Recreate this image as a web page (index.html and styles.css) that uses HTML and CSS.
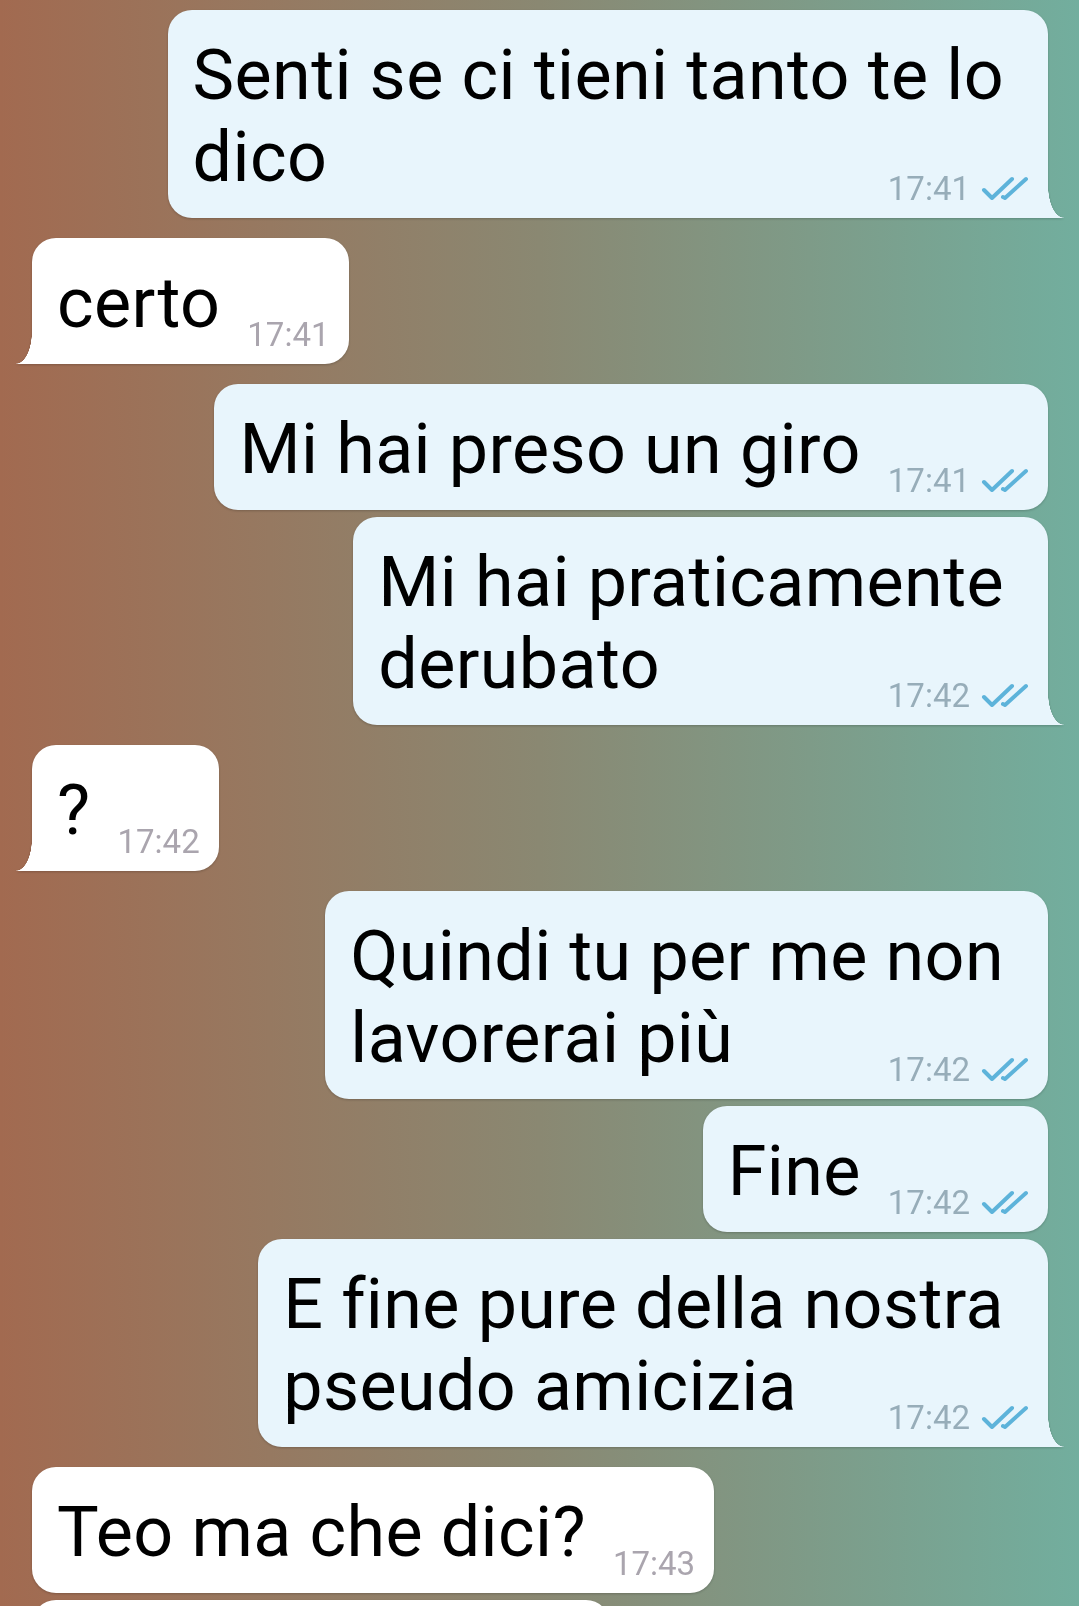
FILE: index.html
```html
<!DOCTYPE html>
<html lang="it">
<head>
    <meta charset="UTF-8">
    <meta name="viewport" content="width=device-width, initial-scale=1.0">
    <title>Chat</title>
    <link rel="stylesheet" href="styles.css">
</head>
<body>
    <main class="chat">
        <div class="group out">
            <div class="bubble multi">
                <p class="text">Senti se ci tieni tanto te lo<br>dico<span class="meta"><span class="time">17:41</span><svg class="check" viewBox="0 0 48 24"><path d="M3 14l8 8L31 3M22 21l2 1L45 3"/></svg></span></p>
            </div>
        </div>
        <div class="group in">
            <div class="bubble">
                <p class="text">certo<span class="meta"><span class="time">17:41</span></span></p>
            </div>
        </div>
        <div class="group out">
            <div class="bubble">
                <p class="text">Mi hai preso un giro<span class="meta"><span class="time">17:41</span><svg class="check" viewBox="0 0 48 24"><path d="M3 14l8 8L31 3M22 21l2 1L45 3"/></svg></span></p>
            </div>
            <div class="bubble multi">
                <p class="text">Mi hai praticamente<br>derubato<span class="meta"><span class="time">17:42</span><svg class="check" viewBox="0 0 48 24"><path d="M3 14l8 8L31 3M22 21l2 1L45 3"/></svg></span></p>
            </div>
        </div>
        <div class="group in">
            <div class="bubble">
                <p class="text">?<span class="meta"><span class="time">17:42</span></span></p>
            </div>
        </div>
        <div class="group out">
            <div class="bubble multi">
                <p class="text">Quindi tu per me non<br>lavorerai più<span class="meta"><span class="time">17:42</span><svg class="check" viewBox="0 0 48 24"><path d="M3 14l8 8L31 3M22 21l2 1L45 3"/></svg></span></p>
            </div>
            <div class="bubble">
                <p class="text">Fine<span class="meta"><span class="time">17:42</span><svg class="check" viewBox="0 0 48 24"><path d="M3 14l8 8L31 3M22 21l2 1L45 3"/></svg></span></p>
            </div>
            <div class="bubble multi">
                <p class="text">E fine pure della nostra<br>pseudo amicizia<span class="meta"><span class="time">17:42</span><svg class="check" viewBox="0 0 48 24"><path d="M3 14l8 8L31 3M22 21l2 1L45 3"/></svg></span></p>
            </div>
        </div>
        <div class="group in">
            <div class="bubble">
                <p class="text">Teo ma che dici?<span class="meta"><span class="time">17:43</span></span></p>
            </div>
            <div class="bubble cut"></div>
        </div>
    </main>
</body>
</html>
```

FILE: styles.css
```css
html {
    background: linear-gradient(90deg, #a26a50, #8a8872 50%, #72ae9e);
}
body {
    margin: 0;
    height: 100vh;
    overflow: hidden;
    font-family: Roboto, "Noto Sans", sans-serif;
}
.chat {
    display: flex;
    flex-direction: column;
    gap: 20px;
    padding: 10px 31px 0 32px;
}
.group {
    display: flex;
    flex-direction: column;
    gap: 7px;
}
.out {
    align-items: flex-end;
}
.in {
    align-items: flex-start;
}
.bubble {
    position: relative;
    max-width: 920px;
    padding: 24px 19px 13px 25px;
    border-radius: 24px;
    background-color: #e8f5fc;
    filter: drop-shadow(0 1px 1px rgba(0, 0, 0, 0.2));
}
.in .bubble {
    background-color: #fff;
    padding-right: 19px;
}
.multi {
    padding-right: 44px;
}
.multi .meta {
    margin-right: -25px;
}
.text {
    display: flow-root;
    margin: 0;
    font-size: 70px;
    line-height: 82px;
    letter-spacing: 0.4px;
    color: #000;
}
.meta {
    float: right;
    margin: 56px 0 0 27px;
    font-size: 33px;
    line-height: 33px;
    letter-spacing: 0;
    white-space: nowrap;
}
.time {
    color: #97adb9;
}
.in .time {
    color: #aaa5ae;
}
.check {
    width: 48px;
    height: 24px;
    margin-left: 11px;
    vertical-align: baseline;
    fill: none;
    stroke: #5db3da;
    stroke-width: 4;
    stroke-linecap: round;
    stroke-linejoin: round;
}
.cut {
    width: 534px;
    height: 88px;
}
/* tail on the last bubble of a group */
.out .bubble:last-child {
    border-bottom-right-radius: 0;
}
.out .bubble:last-child::after {
    content: "";
    position: absolute;
    right: -16px;
    bottom: 0;
    width: 16px;
    height: 32px;
    background: radial-gradient(ellipse 16px 32px at 100% 0, transparent 98%, #e8f5fc 100%);
}
.in .bubble:last-child {
    border-bottom-left-radius: 0;
}
.in .bubble:last-child::after {
    content: "";
    position: absolute;
    left: -16px;
    bottom: 0;
    width: 16px;
    height: 32px;
    background: radial-gradient(ellipse 16px 32px at 0 0, transparent 98%, #fff 100%);
}
```
